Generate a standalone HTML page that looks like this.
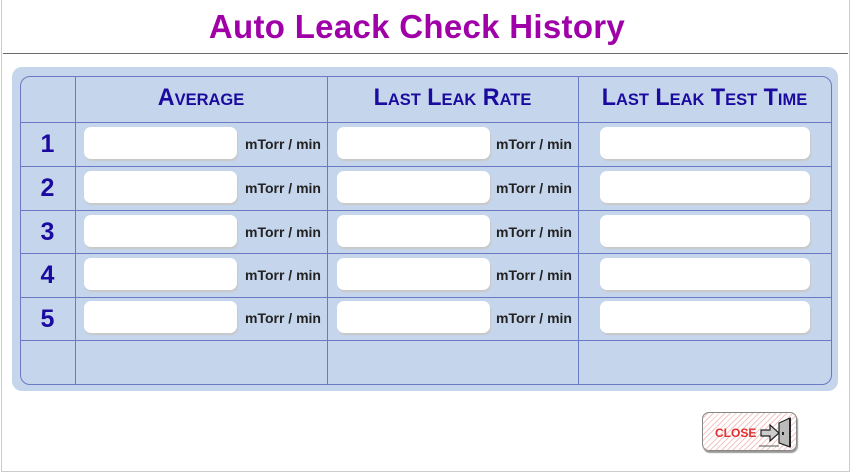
<!DOCTYPE html>
<html><head><style>
body{margin:0;width:850px;height:472px;background:#fff;position:relative;overflow:hidden;font-family:"Liberation Sans",sans-serif}
.frame{position:absolute;left:1px;top:0;width:847px;height:471px;border-left:1px solid #ccc;border-right:1px solid #ccc;border-bottom:1px solid #ccc}
h1{position:absolute;top:8px;left:0;width:834px;margin:0;text-align:center;font-size:33px;font-weight:bold;color:#a000a8;letter-spacing:0.3px}
.hr{position:absolute;left:3px;top:53px;width:845px;height:1px;background:#6a6a6a}
.panel{position:absolute;left:12px;top:67px;width:826px;height:324px;background:#c5d5ec;border-radius:10px}
.tbl{position:absolute;left:20px;top:76px;width:810px;height:307px;border:1px solid #6a7bc4;border-radius:10px}
.v{position:absolute;top:76px;width:1px;height:308px;background:#6a7bc4}
.h{position:absolute;left:21px;width:810px;height:1px;background:#6a7bc4}
.hd{position:absolute;top:84px;color:#1a0aa0;font-weight:bold;font-size:24px;text-align:center;font-variant:small-caps;transform:scaleX(0.97)}
.n{position:absolute;left:20px;width:55px;text-align:center;color:#1a0aa0;font-weight:bold;font-size:25px}
.in{position:absolute;height:32px;background:#fff;border-radius:7px;box-shadow:1px 2px 1px #c9c9c9}
.u{position:absolute;font-size:14px;font-weight:bold;color:#222}
.close{position:absolute;left:702px;top:412px;width:93px;height:37px;border:1px solid #888;border-radius:7px;background:repeating-linear-gradient(135deg,#fff 0 3px,#f3c6c6 3px 4px);box-shadow:1px 2px 1px #999}
.close span{position:absolute;left:12px;top:13px;color:#e03030;font-weight:bold;font-size:12px}
</style></head><body>
<div class="frame"></div>
<h1>Auto Leack Check History</h1>
<div class="hr"></div>
<div class="panel"></div>
<div class="tbl"></div>
<div class="v" style="left:75px"></div>
<div class="v" style="left:327px"></div>
<div class="v" style="left:578px"></div>
<div class="h" style="top:122px"></div>
<div class="h" style="top:166px"></div>
<div class="h" style="top:210px"></div>
<div class="h" style="top:253px"></div>
<div class="h" style="top:297px"></div>
<div class="h" style="top:340px"></div>
<div class="hd" style="left:75px;width:252px">Average</div>
<div class="hd" style="left:327px;width:251px">Last Leak Rate</div>
<div class="hd" style="left:578px;width:253px">Last Leak Test Time</div>

<div class="n" style="top:130px">1</div>
<div class="n" style="top:174px">2</div>
<div class="n" style="top:218px">3</div>
<div class="n" style="top:261px">4</div>
<div class="n" style="top:305px">5</div>

<div class="in" style="left:84px;top:127px;width:153px"></div><div class="u" style="left:245px;top:136px">mTorr / min</div>
<div class="in" style="left:337px;top:127px;width:153px"></div><div class="u" style="left:496px;top:136px">mTorr / min</div>
<div class="in" style="left:600px;top:127px;width:210px"></div>
<div class="in" style="left:84px;top:171px;width:153px"></div><div class="u" style="left:245px;top:180px">mTorr / min</div>
<div class="in" style="left:337px;top:171px;width:153px"></div><div class="u" style="left:496px;top:180px">mTorr / min</div>
<div class="in" style="left:600px;top:171px;width:210px"></div>
<div class="in" style="left:84px;top:215px;width:153px"></div><div class="u" style="left:245px;top:224px">mTorr / min</div>
<div class="in" style="left:337px;top:215px;width:153px"></div><div class="u" style="left:496px;top:224px">mTorr / min</div>
<div class="in" style="left:600px;top:215px;width:210px"></div>
<div class="in" style="left:84px;top:258px;width:153px"></div><div class="u" style="left:245px;top:267px">mTorr / min</div>
<div class="in" style="left:337px;top:258px;width:153px"></div><div class="u" style="left:496px;top:267px">mTorr / min</div>
<div class="in" style="left:600px;top:258px;width:210px"></div>
<div class="in" style="left:84px;top:301px;width:153px"></div><div class="u" style="left:245px;top:310px">mTorr / min</div>
<div class="in" style="left:337px;top:301px;width:153px"></div><div class="u" style="left:496px;top:310px">mTorr / min</div>
<div class="in" style="left:600px;top:301px;width:210px"></div>

<div class="close"><span>CLOSE</span>
<svg style="position:absolute;left:56px;top:3px" width="36" height="33" viewBox="0 0 36 33">
<polygon points="2,14 11,14 11,9 20,17 11,25 11,20 2,20" fill="#ccc" stroke="#222" stroke-width="1.2"/>
<polygon points="20,7 31,2 31,31 20,27" fill="#bbb" stroke="#222" stroke-width="1.2"/>
<line x1="31" y1="2" x2="31" y2="31" stroke="#222" stroke-width="2"/>
<rect x="23" y="16" width="2" height="3" fill="#222"/>
<line x1="0" y1="30" x2="20" y2="30" stroke="#555"/>
</svg></div>
</body></html>
